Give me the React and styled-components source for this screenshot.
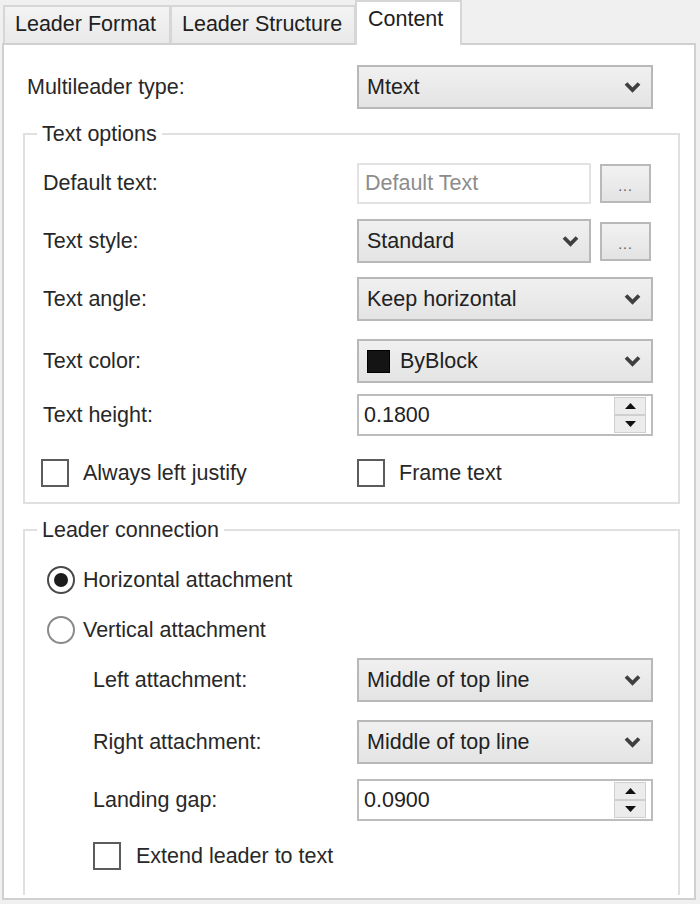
import React from 'react';
import styled, { createGlobalStyle } from 'styled-components';

const GlobalStyle = createGlobalStyle`
    html, body {
        margin: 0;
        padding: 0;
        background: #f0f0f0;
    }
    body {
        font-family: "Liberation Sans", Arial, sans-serif;
    }
`;

const Chevron = () => (
    <svg width="17" height="12" viewBox="0 0 17 12">
        <polyline points="2,2.5 8.5,9 15,2.5" fill="none" stroke="#3f3f3f" strokeWidth="3.8" />
    </svg>
);

const Arrow = ({ up }) => (
    <svg width="11" height="6" viewBox="0 0 11 6">
        <polygon points={up ? '0,6 5.5,0 11,6' : '0,0 5.5,6 11,0'} fill="#111" />
    </svg>
);

const Select = ({ children, swatch }) => (
    <SelectBox>
        {swatch && <Swatch />}
        <SelectText>{children}</SelectText>
        <Chevron />
    </SelectBox>
);

const Spinner = ({ value }) => (
    <SpinBox>
        <SpinValue>{value}</SpinValue>
        <SpinCol>
            <SpinBtn><Arrow up /></SpinBtn>
            <SpinBtn><Arrow /></SpinBtn>
        </SpinCol>
    </SpinBox>
);

const App = () => {
    return (
        <>
            <GlobalStyle />
            <Window>
                <TabStrip>
                    <Tab $w={168}>Leader Format</Tab>
                    <Tab $w={186}>Leader Structure</Tab>
                    <Tab $w={107} $active>Content</Tab>
                </TabStrip>

                <Panel>
                    <TopRow>
                        <Label>Multileader type:</Label>
                        <Select>Mtext</Select>
                    </TopRow>

                    <Group $mt={15}>
                        <Legend>Text options</Legend>
                        <GroupBody $pt={15}>
                            <Row>
                                <Label>Default text:</Label>
                                <Pair>
                                    <TextInput>Default Text</TextInput>
                                    <DotsButton>...</DotsButton>
                                </Pair>
                            </Row>
                            <Row $mt={14}>
                                <Label>Text style:</Label>
                                <Pair>
                                    <Select>Standard</Select>
                                    <DotsButton>...</DotsButton>
                                </Pair>
                            </Row>
                            <Row $mt={14}>
                                <Label>Text angle:</Label>
                                <Select>Keep horizontal</Select>
                            </Row>
                            <Row $mt={18}>
                                <Label>Text color:</Label>
                                <Select swatch>ByBlock</Select>
                            </Row>
                            <Row $mt={10}>
                                <Label>Text height:</Label>
                                <Spinner value="0.1800" />
                            </Row>
                            <Row $mt={14}>
                                <Check $ml={-2} $gap={14}>
                                    <CheckBox />
                                    Always left justify
                                </Check>
                                <Check $gap={14}>
                                    <CheckBox />
                                    Frame text
                                </Check>
                            </Row>
                        </GroupBody>
                    </Group>

                    <Group $mt={14} $open>
                        <Legend>Leader connection</Legend>
                        <GroupBody $pt={22}>
                            <Choice>
                                <Radio $on />
                                Horizontal attachment
                            </Choice>
                            <Choice $mt={18}>
                                <Radio />
                                Vertical attachment
                            </Choice>
                            <Row $mt={12}>
                                <Label $indent={50}>Left attachment:</Label>
                                <Select>Middle of top line</Select>
                            </Row>
                            <Row $mt={18}>
                                <Label $indent={50}>Right attachment:</Label>
                                <Select>Middle of top line</Select>
                            </Row>
                            <Row $mt={14}>
                                <Label $indent={50}>Landing gap:</Label>
                                <Spinner value="0.0900" />
                            </Row>
                            <Row $mt={12}>
                                <Check $ml={50} $gap={15}>
                                    <CheckBox />
                                    Extend leader to text
                                </Check>
                            </Row>
                        </GroupBody>
                    </Group>
                </Panel>
            </Window>
        </>
    );
};

const Window = styled.div`
    width: 700px;
    height: 904px;
    box-sizing: border-box;
    padding-left: 2px;
    background: #f0f0f0;
    font-size: 21.5px;
    color: #282828;
    display: flex;
    flex-direction: column;
    overflow: hidden;
`;

const TabStrip = styled.div`
    display: flex;
    align-items: flex-end;
    height: 43px;
    padding-left: 1px;
`;

const Tab = styled.div`
    position: relative;
    z-index: ${p => (p.$active ? 2 : 1)};
    box-sizing: border-box;
    width: ${p => p.$w}px;
    height: ${p => (p.$active ? 45 : 38)}px;
    margin-left: -1px;
    margin-bottom: ${p => (p.$active ? -2 : 0)}px;
    &:first-child {
        margin-left: 0;
    }
    padding: 0 0 ${p => (p.$active ? 8 : 2)}px ${p => (p.$active ? 11 : 10)}px;
    display: flex;
    align-items: center;
    border: 2px solid #d6d6d6;
    border-bottom: none;
    background: ${p => (p.$active ? '#ffffff' : 'linear-gradient(#f3f3f3, #e9e9e9)')};
    color: #202020;
    white-space: nowrap;
`;

const Panel = styled.div`
    position: relative;
    z-index: 1;
    box-sizing: border-box;
    width: 694px;
    height: 857px;
    padding: 0 14px 0 19px;
    border: 2px solid #d0d0d0;
    background: #ffffff;
    display: flex;
    flex-direction: column;
`;

const TopRow = styled.div`
    display: grid;
    grid-template-columns: 1fr 296px;
    align-items: center;
    height: 42px;
    margin-top: 20px;
    padding: 0 27px 0 4px;
`;

const Group = styled.fieldset`
    margin: ${p => p.$mt}px 0 ${p => (p.$open ? 3 : 0)}px;
    padding: 0;
    min-width: 0;
    border: 2px solid #e0e0e0;
    border-bottom: ${p => (p.$open ? 'none' : '2px solid #e0e0e0')};
    flex: ${p => (p.$open ? 1 : 'none')};
`;

const Legend = styled.legend`
    margin-left: 12px;
    padding: 0 5px;
    line-height: 24px;
    color: #282828;
`;

const GroupBody = styled.div`
    display: flex;
    flex-direction: column;
    padding: ${p => p.$pt}px 25px 7px 18px;
`;

const Row = styled.div`
    display: grid;
    grid-template-columns: 1fr 296px;
    align-items: center;
    height: 44px;
    margin-top: ${p => p.$mt || 0}px;
`;

const Label = styled.span`
    padding-left: ${p => p.$indent || 0}px;
    white-space: nowrap;
`;

const Pair = styled.div`
    display: flex;
    align-items: center;
    gap: 9px;
    padding-right: 2px;

    > :first-child {
        flex: 1;
    }
`;

const SelectBox = styled.div`
    box-sizing: border-box;
    height: 44px;
    display: flex;
    align-items: center;
    gap: 10px;
    padding: 0 10px 0 8px;
    border: 2px solid #b8b8b8;
    background: linear-gradient(#f0f0f0, #e4e4e4);
    color: #222;
`;

const SelectText = styled.span`
    flex: 1;
    white-space: nowrap;
`;

const Swatch = styled.span`
    width: 23px;
    height: 23px;
    background: #141414;
    border: 1px solid #000;
    box-sizing: border-box;
`;

const TextInput = styled.div`
    box-sizing: border-box;
    height: 41px;
    display: flex;
    align-items: center;
    padding-left: 6px;
    border: 2px solid #e2e2e2;
    background: #ffffff;
    color: #8c8c8c;
`;

const DotsButton = styled.div`
    box-sizing: border-box;
    flex: none;
    width: 51px;
    height: 39px;
    display: flex;
    align-items: flex-end;
    justify-content: center;
    padding-bottom: 8px;
    border: 2px solid #b9b9b9;
    background: linear-gradient(#f2f2f2, #e3e3e3);
    font-size: 14px;
    line-height: 14px;
    color: #555;
    letter-spacing: 1px;
`;

const SpinBox = styled.div`
    box-sizing: border-box;
    height: 42px;
    display: flex;
    align-items: stretch;
    padding: 1px 5px 1px 5px;
    border: 2px solid #bdbdbd;
    background: #ffffff;
`;

const SpinValue = styled.span`
    flex: 1;
    display: flex;
    align-items: center;
    color: #222;
`;

const SpinCol = styled.div`
    width: 30px;
    display: flex;
    flex-direction: column;
    border: 1px solid #cfcfcf;
    background: #ececec;
`;

const SpinBtn = styled.div`
    flex: 1;
    display: flex;
    align-items: center;
    justify-content: center;
    & + & {
        border-top: 2px solid #cfcfcf;
    }
`;

const Check = styled.label`
    display: flex;
    align-items: center;
    gap: ${p => p.$gap}px;
    margin-left: ${p => p.$ml || 0}px;
    white-space: nowrap;
`;

const CheckBox = styled.span`
    box-sizing: border-box;
    width: 28px;
    height: 28px;
    border: 2px solid #5c5c5c;
    background: #ffffff;
`;

const Choice = styled.label`
    display: flex;
    align-items: center;
    gap: 8px;
    height: 32px;
    margin-top: ${p => p.$mt || 0}px;
    padding-left: 4px;
    white-space: nowrap;
`;

const Radio = styled.span`
    box-sizing: border-box;
    width: 28px;
    height: 28px;
    border-radius: 50%;
    border: 2px solid ${p => (p.$on ? '#4a4a4a' : '#8a8a8a')};
    background: #ffffff;
    display: flex;
    align-items: center;
    justify-content: center;

    &::after {
        content: '';
        display: ${p => (p.$on ? 'block' : 'none')};
        width: 14px;
        height: 14px;
        border-radius: 50%;
        background: #1c1c1c;
    }
`;

export default App;
